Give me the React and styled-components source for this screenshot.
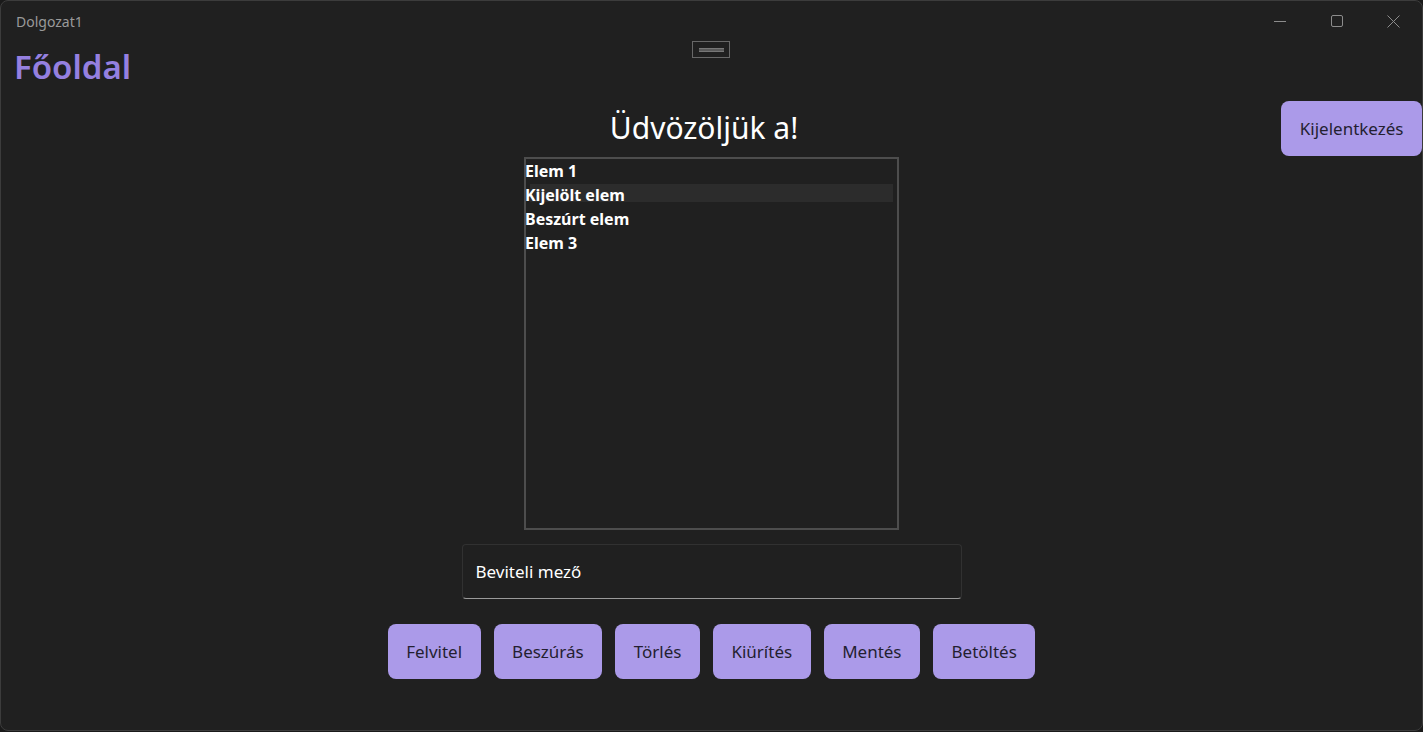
import React from 'react'
import styled, { createGlobalStyle } from 'styled-components'

const GlobalStyle = createGlobalStyle`
  html, body {
    margin: 0;
    padding: 0;
    background: #1a1a1a;
    font-family: "Noto Sans", "Open Sans", sans-serif;
    overflow: hidden;
  }
`

const Window = styled.div`
  position: relative;
  box-sizing: border-box;
  width: 1423px;
  height: 731px;
  background: #202020;
  border: 1px solid #3c3c3c;
  border-radius: 8px;
  display: flex;
  flex-direction: column;
  color: #fff;
`

const TitleBar = styled.div`
  height: 40px;
  display: flex;
  align-items: center;
  justify-content: space-between;
  padding-left: 15px;
`

const AppName = styled.span`
  font-size: 14px;
  color: #9a9a9a;
`

const Controls = styled.div`
  display: flex;
  align-self: stretch;
`

const ControlButton = styled.div`
  width: 57px;
  display: flex;
  align-items: center;
  justify-content: center;
  color: #8c8c8c;
`

const DragHandle = styled.div`
  position: absolute;
  top: 40px;
  left: 691px;
  width: 36px;
  height: 15px;
  border: 1px solid #686868;
  display: flex;
  align-items: center;
  justify-content: center;

  &::after {
    content: '';
    width: 25px;
    height: 2px;
    background: #5a5a5a;
    border: 1px solid #777;
    border-left: none;
    border-right: none;
  }
`

const PageTitle = styled.h1`
  margin: 4px 0 0 13px;
  font-size: 33px;
  line-height: 44px;
  font-weight: 600;
  color: #9580e0;
`

const Main = styled.div`
  margin-top: 12px;
  display: grid;
  grid-template-columns: 1fr auto 1fr;
`

const Center = styled.div`
  grid-column: 2;
  display: flex;
  flex-direction: column;
  align-items: center;
`

const Side = styled.div`
  grid-column: 3;
  justify-self: end;
  align-self: start;
`

const Welcome = styled.h2`
  margin: 7px 15px 9px 0;
  font-size: 30px;
  line-height: 40px;
  font-weight: 400;
`

const ListBox = styled.div`
  box-sizing: border-box;
  width: 375px;
  height: 373px;
  border: 2px solid #4d4d4d;
  padding: 0;
`

const Item = styled.div`
  position: relative;
  margin-left: -1px;
  font-size: 16px;
  line-height: 24px;
  font-weight: 700;

  &::before {
    content: '';
    display: ${p => (p.$selected ? 'block' : 'none')};
    position: absolute;
    left: 5px;
    right: 4px;
    top: 1px;
    height: 18px;
    background: #2c2c2c;
  }

  span {
    position: relative;
  }
`

const TextBox = styled.div`
  box-sizing: border-box;
  width: 500px;
  height: 55px;
  margin-top: 14px;
  padding-left: 13px;
  display: flex;
  align-items: center;
  font-size: 17px;
  border: 1px solid #313131;
  border-bottom: 1px solid #9a9a9a;
  border-radius: 4px;
`

const ButtonRow = styled.div`
  display: flex;
  gap: 13px;
  margin-top: 25px;
`

const Button = styled.button`
  height: 55px;
  padding: 0 18.5px;
  border: none;
  border-radius: 8px;
  background: #ab9ae9;
  color: #241f31;
  font-family: "Noto Sans", "Open Sans", sans-serif;
  font-size: 17px;
  cursor: pointer;
`

const items = ['Elem 1', 'Kijelölt elem', 'Beszúrt elem', 'Elem 3']
const actions = ['Felvitel', 'Beszúrás', 'Törlés', 'Kiürítés', 'Mentés', 'Betöltés']

export default function App() {
  return (
    <>
      <GlobalStyle />
      <Window>
        <TitleBar>
          <AppName>Dolgozat1</AppName>
          <Controls>
            <ControlButton>
              <svg width="12" height="12" viewBox="0 0 12 12">
                <path d="M0 6.5h12" stroke="currentColor" strokeWidth="1" />
              </svg>
            </ControlButton>
            <ControlButton>
              <svg width="12" height="12" viewBox="0 0 12 12">
                <rect x="0.5" y="0.5" width="11" height="11" rx="1.5" fill="none" stroke="currentColor" strokeWidth="1" />
              </svg>
            </ControlButton>
            <ControlButton>
              <svg width="13" height="13" viewBox="0 0 13 13">
                <path d="M0.5 0.5l12 12M12.5 0.5l-12 12" stroke="currentColor" strokeWidth="1" />
              </svg>
            </ControlButton>
          </Controls>
        </TitleBar>
        <DragHandle />
        <PageTitle>Főoldal</PageTitle>
        <Main>
          <Center>
            <Welcome>Üdvözöljük a!</Welcome>
            <ListBox>
              {items.map((t, i) => (
                <Item key={t} $selected={i === 1}>
                  <span>{t}</span>
                </Item>
              ))}
            </ListBox>
            <TextBox>Beviteli mező</TextBox>
            <ButtonRow>
              {actions.map(a => (
                <Button key={a}>{a}</Button>
              ))}
            </ButtonRow>
          </Center>
          <Side>
            <Button>Kijelentkezés</Button>
          </Side>
        </Main>
      </Window>
    </>
  )
}
